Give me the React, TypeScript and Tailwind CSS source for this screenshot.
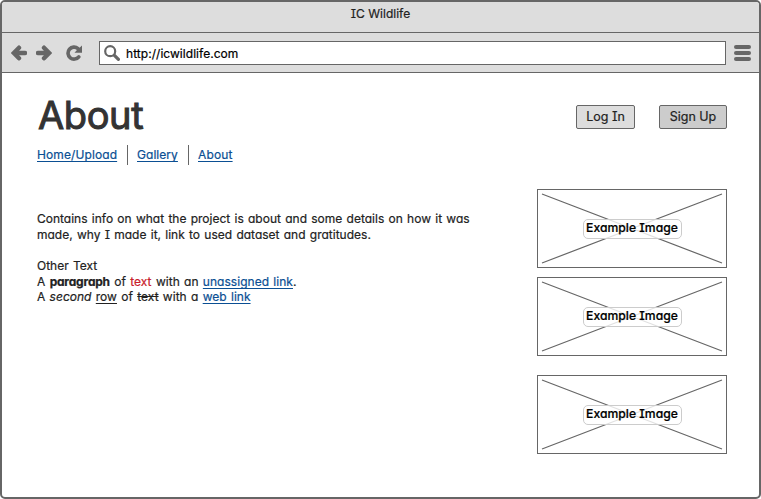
import type { ReactNode } from "react";

const link =
  "text-[#0b4f93] underline decoration-1 underline-offset-2 [text-decoration-skip-ink:none]";

function Toolbar() {
  return (
    <div className="flex h-10 items-center border-b border-[#666] bg-[#ddd] pl-[9px] pr-[8px]">
      <svg className="h-4 w-4 shrink-0" viewBox="0 0 16 16" fill="none" stroke="#666" strokeWidth="4.400" strokeLinecap="round">
        <path d="M8 2.700 2.800 8 8 13.300M4 8h10" />
      </svg>
      <svg className="ml-[9px] h-4 w-4 shrink-0" viewBox="0 0 16 16" fill="none" stroke="#666" strokeWidth="4.400" strokeLinecap="round">
        <path d="M8 2.700 13.200 8 8 13.300M12 8H2" />
      </svg>
      <svg className="ml-[14px] h-4 w-4 shrink-0" viewBox="0 0 16 16" fill="none">
        <path d="M12.800 11.800a6 6 0 1 1-.8-8.200" stroke="#666" strokeWidth="3.600" strokeLinecap="round" />
        <path d="M16 .5V7.800H8.500L10.500 5.500Z" fill="#666" />
      </svg>
      <div className="ml-[17px] flex h-6 w-[627px] shrink-0 items-center border border-[#666] bg-white pl-1">
        <svg className="h-4 w-4 shrink-0" viewBox="0 0 16 16" fill="none" stroke="#666">
          <circle cx="6.200" cy="6.200" r="5" strokeWidth="2.200" />
          <path d="m10.400 10.400 4 4" strokeWidth="3.200" strokeLinecap="round" />
        </svg>
        <span className="ml-[6px] mt-[2px] text-[12px] tracking-[0.04px] text-black">http://icwildlife.com</span>
      </div>
      <div className="ml-[8px] flex w-[18px] flex-col gap-[2px]">
        <div className="h-1 rounded-full bg-[#666]" />
        <div className="h-1 rounded-full bg-[#666]" />
        <div className="h-1 rounded-full bg-[#666]" />
      </div>
    </div>
  );
}

function ExampleImage({ className = "" }: { className?: string }) {
  return (
    <div className={`relative flex h-[79px] w-[190px] items-center justify-center border border-[#666] ${className}`}>
      <svg className="absolute inset-0" width="188" height="77" viewBox="0 0 188 77" stroke="#666" strokeWidth="1.200">
        <path d="M4 4 184 73M4 73 184 4" />
      </svg>
      <div className="relative flex h-5 w-[99px] items-center justify-center rounded-[5px] border border-[#ccc] bg-white/80">
        <span className="whitespace-nowrap text-[12.2px] leading-none font-medium text-black">Example Image</span>
      </div>
    </div>
  );
}

function Line({ className = "", children }: { className?: string; children: ReactNode }) {
  return <p className={`whitespace-nowrap ${className}`}>{children}</p>;
}

export default function App() {
  return (
    <div className="flex h-[499px] w-[761px] flex-col overflow-hidden rounded-[5px] border-2 border-[#666] bg-white font-['Inter',sans-serif] text-[12px] font-normal text-[#222] [-webkit-text-stroke-width:0.2px] [font-feature-settings:'cv11','cv08']">
      <div className="flex h-[31px] justify-center border-b border-[#666] bg-[#ddd] pt-[4px]">
        <span className="leading-4">IC Wildlife</span>
      </div>
      <Toolbar />
      <div className="flex flex-1 pl-[35px]">
        <main className="w-[500px] pt-[21px]">
          <h1 className="ml-px text-[38px] leading-[42px] font-normal tracking-[-0.4px] text-[#333] [-webkit-text-stroke-width:1px]">About</h1>
          <nav className="mt-[9px] flex h-5 items-start leading-[15px]">
            <a className={`mt-[2px] w-20 tracking-[0.1px] ${link}`}>Home/Upload</a>
            <div className="mr-[9px] ml-[10px] h-5 w-px bg-[#666]" />
            <a className={`mt-[2px] w-[42px] tracking-[0.05px] ${link}`}>Gallery</a>
            <div className="mx-[9px] h-5 w-px bg-[#666]" />
            <a className={`mt-[2px] w-[35px] tracking-[0.15px] ${link}`}>About</a>
          </nav>
          <div className="mt-[46px] leading-[15.7px] [word-spacing:0.9px]">
            <Line>Contains info on what the project is about and some details on how it was</Line>
            <Line>made, why I made it, link to used dataset and gratitudes.</Line>
            <Line className="mt-[15.7px]">Other Text</Line>
            <Line className="tracking-[0.03px]">A <b className="tracking-[-0.2px]">paragraph</b> of <span className="text-[#c8202b]">text</span> with an <a className={link}>unassigned link</a>.</Line>
            <Line className="-mt-[0.7px] tracking-[0.02px]">A <i>second</i> <span className="underline decoration-1 underline-offset-2">row</span> of <s>text</s> with a <a className={link}>web link</a></Line>
          </div>
        </main>
        <aside className="w-[190px] pt-[32px]">
          <div className="ml-[39px] flex justify-between text-[12.5px]">
            <button className="h-6 w-[59px] rounded-[2px] border border-[#666] bg-[#ddd]">Log In</button>
            <button className="h-6 w-[68px] rounded-[2px] border border-[#666] bg-[#ccc]">Sign Up</button>
          </div>
          <ExampleImage className="mt-[60px]" />
          <ExampleImage className="mt-[9px]" />
          <ExampleImage className="mt-[19px]" />
        </aside>
      </div>
    </div>
  );
}
